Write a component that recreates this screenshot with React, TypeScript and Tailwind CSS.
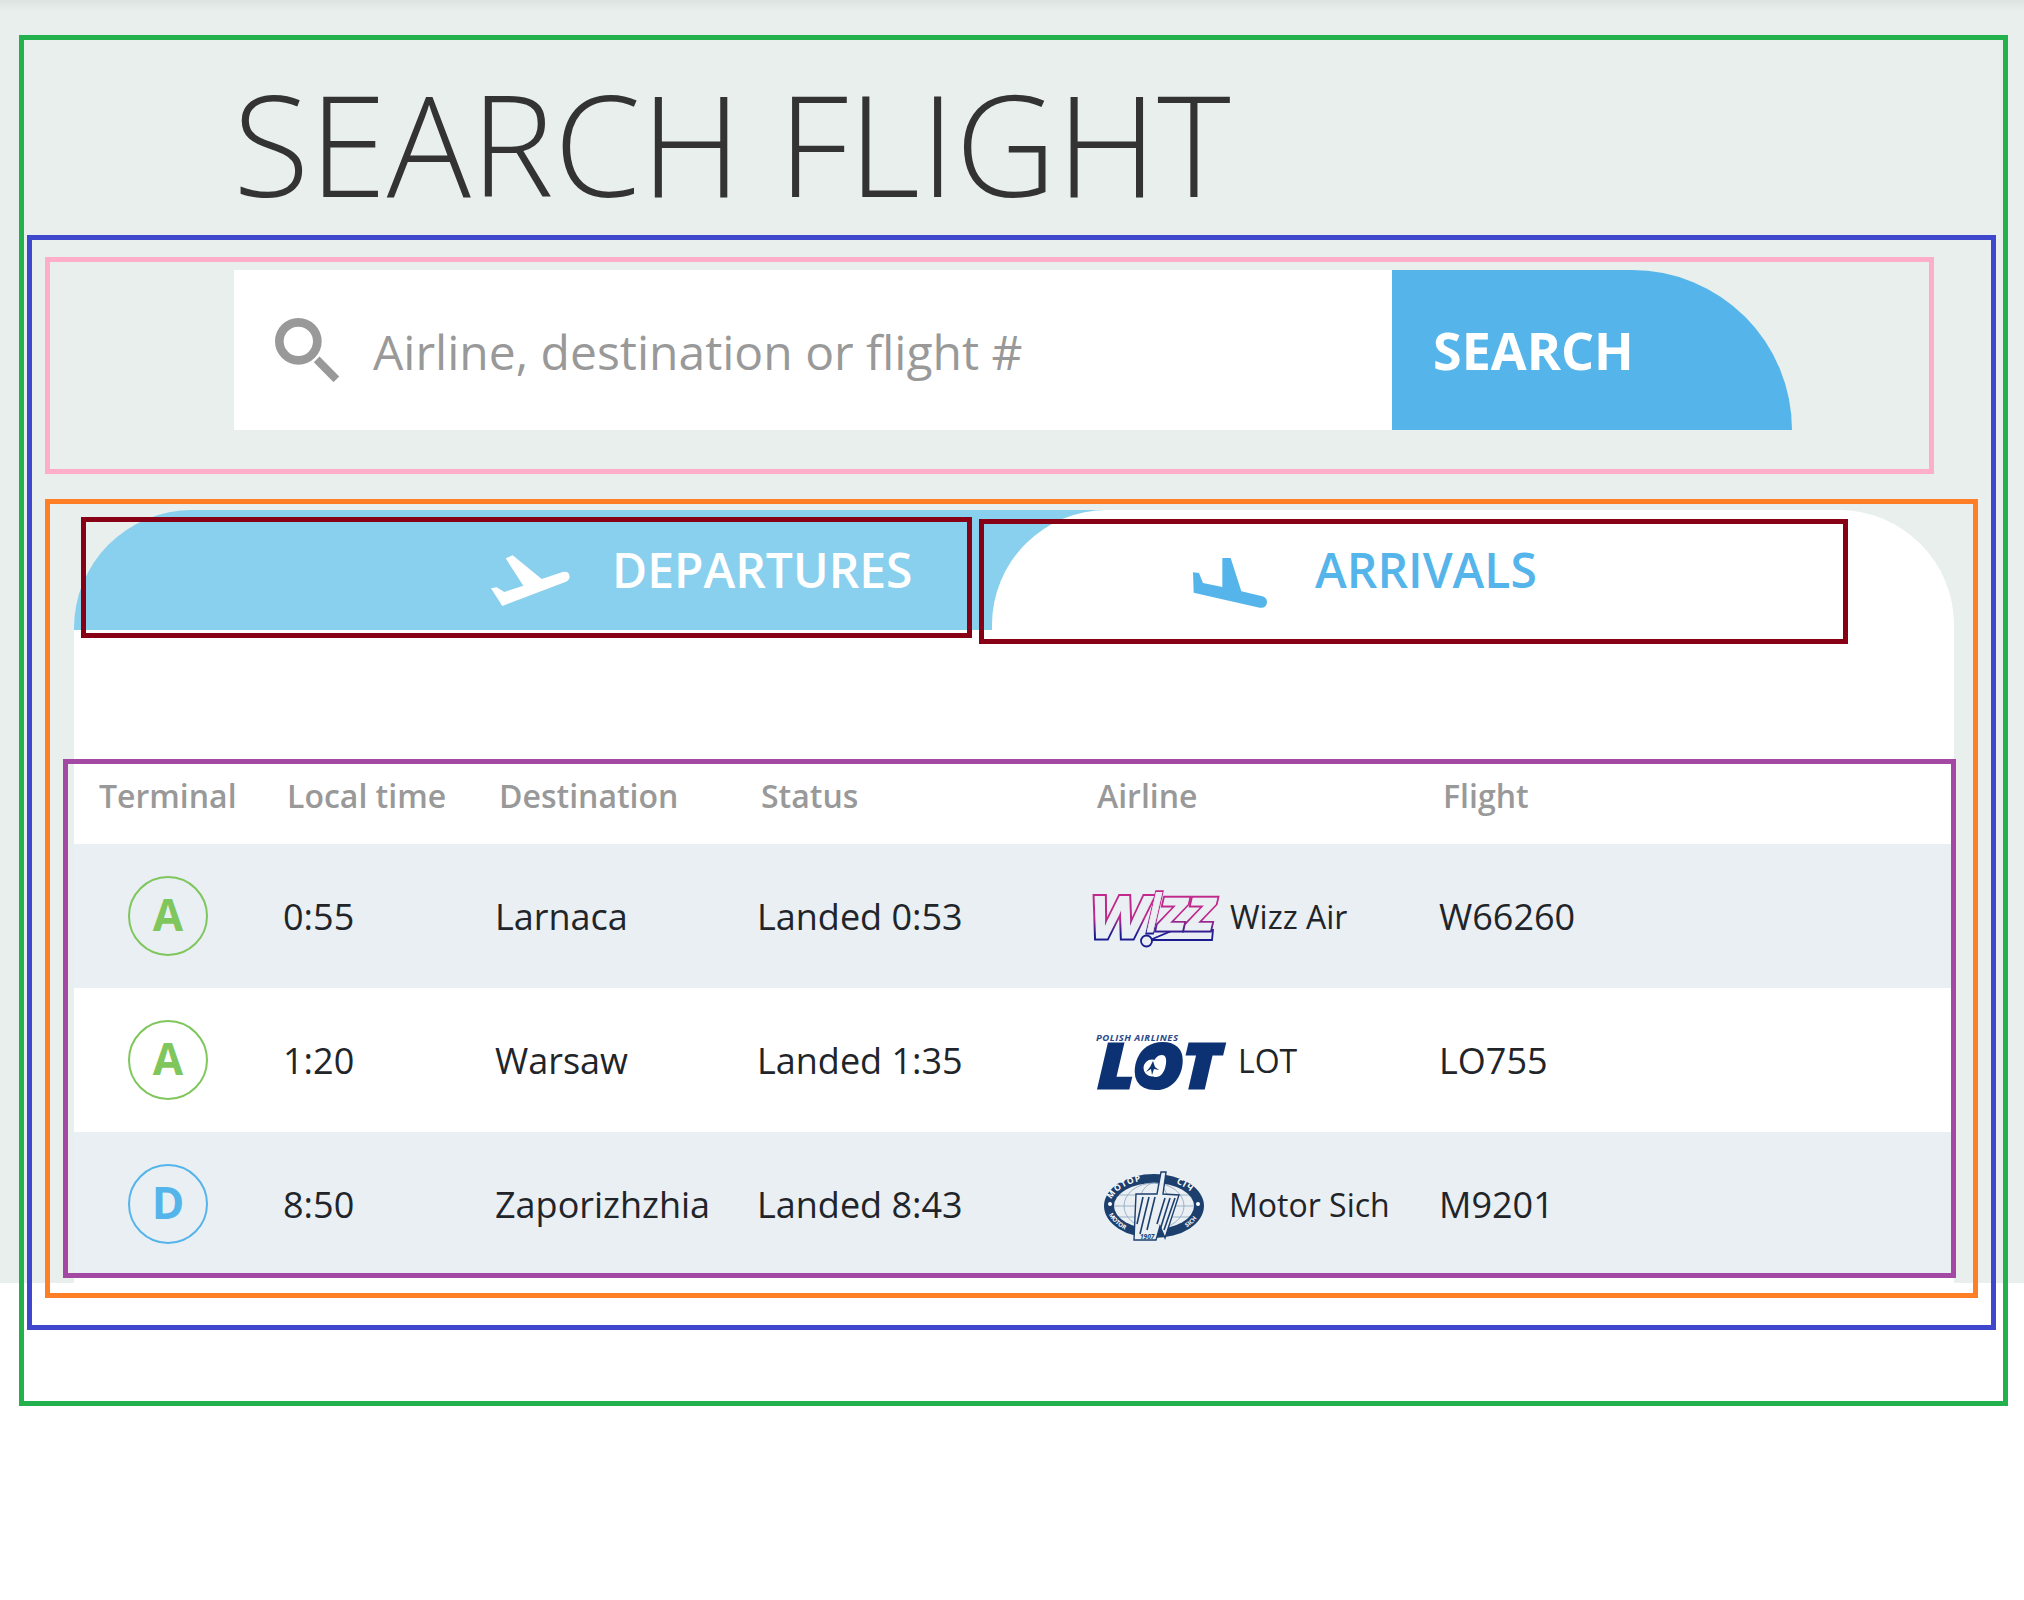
const columns = "grid grid-cols-[209px_212px_262px_336px_346px_1fr]";

const flights = [
  { terminal: "A", time: "0:55", destination: "Larnaca", status: "Landed 0:53", airline: "Wizz Air", logo: "wizz", flight: "W66260" },
  { terminal: "A", time: "1:20", destination: "Warsaw", status: "Landed 1:35", airline: "LOT", logo: "lot", flight: "LO755" },
  { terminal: "D", time: "8:50", destination: "Zaporizhzhia", status: "Landed 8:43", airline: "Motor Sich", logo: "motor", flight: "M9201" },
];

function SearchIcon() {
  return (
    <svg viewBox="45 48 192 192" className="w-16 h-16 shrink-0">
      <circle cx="115" cy="118" r="57" fill="none" stroke="#999999" strokeWidth="26" />
      <path d="M170 172 L229 232" stroke="#999999" strokeWidth="24" fill="none" />
    </svg>
  );
}

function DepartureIcon() {
  return (
    <svg viewBox="60 75 240 153" className="w-20 h-[51px] mt-[21px] shrink-0">
      <path
        fill="#ffffff"
        d="M63 175 L80 172 L103 186 L160 167 L107 85 L128 76 L215 147 L278 126 Q298 122 299 141 Q298 153 280 158 L97 228 Z"
      />
    </svg>
  );
}

function ArrivalIcon() {
  return (
    <svg viewBox="70 54 222 150" className="w-[74px] h-[50px] mt-[26px] shrink-0">
      <path
        fill="#55b5ea"
        d="M70 97 L88 99 L100 129 L158 141 L158 54 L183 54 L215 154 L275 168 Q292 172 292 186 Q290 206 270 203 L72 158 Z"
      />
    </svg>
  );
}

function WizzLetters({ paint, width }: { paint: string; width: number }) {
  const style = { fontFamily: "'Open Sans', sans-serif", fontWeight: 700, fontSize: 58 };
  return (
    <g transform="skewX(-13)" fill="#e9eff3" stroke={paint} strokeWidth={width} strokeLinejoin="miter">
      <text x="7" y="62" textLength="58" lengthAdjust="spacingAndGlyphs" {...style}>W</text>
      <text x="64" y="56" textLength="12" lengthAdjust="spacingAndGlyphs" {...style} fontSize="72">ı</text>
      <text x="75" y="54" textLength="56" lengthAdjust="spacingAndGlyphs" {...style}>zz</text>
    </g>
  );
}

function WizzLogo() {
  return (
    <svg viewBox="0 -10 137 100" className="w-[137px] h-[100px] shrink-0 overflow-visible">
      <defs>
        <linearGradient id="wizz" gradientUnits="userSpaceOnUse" x1="0" y1="12" x2="0" y2="66">
          <stop offset="0.55" stopColor="#c0288c" />
          <stop offset="0.85" stopColor="#1c1c90" />
        </linearGradient>
      </defs>
      <path d="M57 64 L119 64 L120 54 L81 54 Z" fill="#e9eff3" stroke="url(#wizz)" strokeWidth="1.8" />
      <WizzLetters paint="url(#wizz)" width={5} />
      <WizzLetters paint="#e9eff3" width={1.2} />
      <circle cx="53.5" cy="65" r="5.5" fill="#e9eff3" stroke="#1c1c90" strokeWidth="1.8" />
    </svg>
  );
}

function LotLogo() {
  return (
    <svg viewBox="0 -10 145 100" className="w-[145px] h-[100px] shrink-0">
      <text x="3" y="21" textLength="82" fontFamily="'Open Sans', sans-serif" fontWeight="700" fontStyle="italic" fontSize="9.5" fill="#2a4a8a">
        POLISH AIRLINES
      </text>
      <text x="5" y="68" transform="translate(0 6) scale(1 0.91)" textLength="122" fontFamily="'Open Sans', sans-serif" fontWeight="800" fontStyle="italic" fontSize="68" fill="#0d3273" stroke="#0d3273" strokeWidth="3.5">
        LOT
      </text>
      <circle cx="59" cy="48" r="8.5" fill="#ffffff" />
      <path d="M60 41 L62 47 L66 50 L61 49 L59 55 L58 49 L53 52 L57 47 Z" fill="#0d3273" />
    </svg>
  );
}

function MotorLogo() {
  const label = { fontFamily: "'Open Sans', sans-serif", fontWeight: 700, fill: "#ffffff" };
  return (
    <svg viewBox="0 -10 136 100" className="w-[136px] h-[100px] shrink-0">
      <defs>
        <path id="ring-top" d="M17 42 A44 26 0 0 1 105 42" />
        <path id="ring-bottom" d="M14 42 A47 30 0 0 0 108 42" />
      </defs>
      <ellipse cx="61" cy="42" rx="50" ry="32" fill="#1d3f6e" />
      <ellipse cx="61" cy="42" rx="40" ry="23" fill="#e9eff3" />
      <g fill="none" stroke="#8aa4bc" strokeWidth="0.8">
        <ellipse cx="61" cy="42" rx="30" ry="23" />
        <ellipse cx="61" cy="42" rx="15" ry="23" />
        <path d="M21 42 H101 M26 31 H96 M26 53 H96" />
      </g>
      <text {...label} fontSize="8.5" letterSpacing="1">
        <textPath href="#ring-top" startOffset="6%">МОТОР</textPath>
      </text>
      <text {...label} fontSize="8.5" letterSpacing="1">
        <textPath href="#ring-top" startOffset="70%">СІЧ</textPath>
      </text>
      <text {...label} fontSize="6">
        <textPath href="#ring-bottom" startOffset="7%">MOTOR</textPath>
      </text>
      <text {...label} fontSize="6">
        <textPath href="#ring-bottom" startOffset="78%">SICH</textPath>
      </text>
      <circle cx="17" cy="40" r="2" fill="#ffffff" />
      <circle cx="105" cy="40" r="2" fill="#ffffff" />
      <path d="M43 30 L64 30 L68 8 L73 8 L70 30 L86 31 L72 74 L67 62 L63 76 L41 76 Z" fill="#e9eff3" stroke="#1d3f6e" strokeWidth="1.4" />
      <g stroke="#1d3f6e" strokeWidth="1.6" fill="none">
        <path d="M50 33 L44 60 M56 33 L47 70 M62 33 L54 66" />
        <path d="M72 34 L64 60 M77 34 L67 66 M82 34 L71 66" />
      </g>
      <text x="47" y="75" fontFamily="'Open Sans', sans-serif" fontStyle="italic" fontWeight="700" fontSize="6.5" fill="#1d3f6e">
        1907
      </text>
    </svg>
  );
}

function AirlineLogo({ name }: { name: string }) {
  if (name === "wizz") return <WizzLogo />;
  if (name === "lot") return <LotLogo />;
  return <MotorLogo />;
}

function TerminalBadge({ terminal }: { terminal: string }) {
  const tone = terminal === "A" ? "border-[#7fc65c] text-[#7fc65c]" : "border-[#55b5ea] text-[#55b5ea]";
  return (
    <div className={`w-20 h-20 ml-[54px] pb-1 rounded-full border-2 flex items-center justify-center text-[44px] font-bold ${tone}`}>
      {terminal}
    </div>
  );
}

export default function App() {
  return (
    <div className="relative min-h-[1600px] bg-white font-['Open_Sans',sans-serif]">
      <div className="h-[1283px] bg-[#e8efed]">
        <h1 className="pt-[73px] pl-[233px] text-[140px] leading-[140px] font-light text-[#333333]">SEARCH FLIGHT</h1>

        <div className="flex h-40 mt-[57px] ml-[234px]">
          <div className="w-[1158px] bg-white flex items-center pl-[41px] gap-[34px]">
            <SearchIcon />
            <span className="pt-[4px] text-[48px] text-[#999999]">Airline, destination or flight #</span>
          </div>
          <div className="w-[400px] bg-[#55b5ea] rounded-tr-[160px] flex items-center pl-[41px] text-[52px] font-bold text-white">
            SEARCH
          </div>
        </div>

        <div className="w-[1880px] mt-20 ml-[74px]">
          <div className="flex h-[120px]">
            <div className="w-[1028px] bg-[#89d0ee] rounded-tl-[118px] flex items-center pl-[416px] gap-[42px]">
              <DepartureIcon />
              <span className="text-[48px] font-semibold text-white">DEPARTURES</span>
            </div>
            <div className="relative -ml-[110px] flex-1 bg-white rounded-t-[115px] flex items-center pl-[201px] gap-[48px]">
              <ArrivalIcon />
              <span className="text-[48px] font-semibold text-[#55b5ea]">ARRIVALS</span>
            </div>
          </div>

          <div className="bg-white pt-[142px] pb-[7px]">
            <div className={`${columns} h-[72px] ml-1 text-[32px] leading-[48px] font-semibold text-[#999999]`}>
              <div className="pl-[21px]">Terminal</div>
              <div>Local time</div>
              <div>Destination</div>
              <div>Status</div>
              <div>Airline</div>
              <div>Flight</div>
            </div>
            {flights.map((f, i) => (
              <div key={f.flight} className={`${columns} h-36 items-center text-[36px] text-[#212529] ${i % 2 === 0 ? "bg-[#e9eff3]" : "bg-white"}`}>
                <TerminalBadge terminal={f.terminal} />
                <div className="pt-0.5">{f.time}</div>
                <div className="pt-0.5">{f.destination}</div>
                <div className="pt-0.5">{f.status}</div>
                <div className="flex items-center text-[32px]">
                  <AirlineLogo name={f.logo} />
                  <span className="pt-0.5">{f.airline}</span>
                </div>
                <div className="pt-0.5">{f.flight}</div>
              </div>
            ))}
          </div>
        </div>
      </div>

      {/* shadow from the bar above the crop */}
      <div className="absolute left-0 right-0 top-0 h-3 bg-gradient-to-b from-[#dde3e1] to-transparent" />

      {/* annotation boxes drawn over the screenshot */}
      <div className="absolute left-[19px] top-[35px] w-[1989px] h-[1371px] border-[5px] border-[#22b14c]" />
      <div className="absolute left-[27px] top-[235px] w-[1969px] h-[1095px] border-[5px] border-[#3f48cc]" />
      <div className="absolute left-[45px] top-[257px] w-[1889px] h-[217px] border-[5px] border-[#ffaec9]" />
      <div className="absolute left-[45px] top-[499px] w-[1933px] h-[799px] border-[5px] border-[#ff7f27]" />
      <div className="absolute left-[81px] top-[517px] w-[891px] h-[121px] border-[5px] border-[#880015]" />
      <div className="absolute left-[979px] top-[519px] w-[869px] h-[125px] border-[5px] border-[#880015]" />
      <div className="absolute left-[63px] top-[759px] w-[1893px] h-[519px] border-[5px] border-[#a349a4]" />
    </div>
  );
}
